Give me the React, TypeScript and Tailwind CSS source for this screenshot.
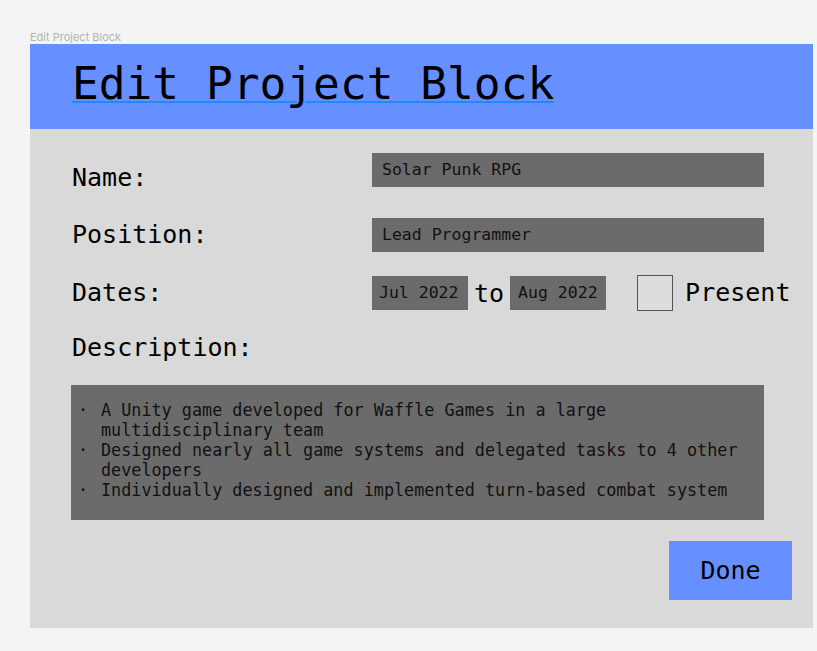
import { useState } from "react"

const mono = { fontFamily: '"DejaVu Sans Mono", monospace' }

function Field({ value, className }: { value: string; className: string }) {
  return (
    <div className={`flex items-center bg-[#6b6b6b] text-[16.5px] leading-[20px] text-[#111] ${className}`}>
      {value}
    </div>
  )
}

export default function App() {
  const [present, setPresent] = useState<boolean>(false)
  const bullets = [
    "A Unity game developed for Waffle Games in a large multidisciplinary team",
    "Designed nearly all game systems and delegated tasks to 4 other developers",
    "Individually designed and implemented turn-based combat system",
  ]

  return (
    <div className="min-h-[651px] w-[817px] bg-[#f4f4f4] pt-[30px] pl-[30px]">
      <div className="text-[11px] leading-[14px] text-[#b3b3b3]" style={{ fontFamily: "Inter, sans-serif" }}>
        Edit Project Block
      </div>
      <div className="w-[783px] h-[584px] bg-[#d9d9d9] flex flex-col" style={mono}>
        <div className="h-[85px] bg-[#6690ff] pl-[42px] pt-[13px]">
          <h1 className="text-[44.5px] leading-[54px] text-black underline decoration-[#1a8cff] decoration-2 underline-offset-[2px]">
            Edit Project Block
          </h1>
        </div>

        <div className="flex flex-col pl-[42px] pt-[24px] text-black">
          <div className="flex items-start h-[34px]">
            <div className="w-[300px] text-[25px] leading-[30px] mt-[10px]">Name:</div>
            <Field value="Solar Punk RPG" className="w-[392px] h-[34px] pl-[10px]" />
          </div>

          <div className="flex items-center mt-[31px]">
            <div className="w-[300px] text-[25px] leading-[30px]">Position:</div>
            <Field value="Lead Programmer" className="w-[392px] h-[34px] pl-[10px]" />
          </div>

          <div className="flex items-center mt-[23px]">
            <div className="w-[300px] text-[25px] leading-[30px]">Dates:</div>
            <Field value="Jul 2022" className="w-[96px] h-[34px] pl-[7px]" />
            <span className="text-[25px] leading-[30px] mx-[6px] mt-[2px]">to</span>
            <Field value="Aug 2022" className="w-[96px] h-[34px] pl-[8px]" />
            <button
              onClick={() => setPresent(!present)}
              className="ml-[31px] w-[36px] h-[36px] border border-[#555] bg-[#dcdcdc] flex items-center justify-center text-[22px]"
            >
              {present ? "✓" : ""}
            </button>
            <span className="ml-[12px] text-[25px] leading-[30px]">Present</span>
          </div>

          <div className="text-[25px] leading-[30px] mt-[22px]">Description:</div>

          <div className="mt-[22px] -ml-[1px] w-[693px] h-[135px] bg-[#6b6b6b] pt-[15px] pl-[7px] pr-[8px] text-[16.8px] leading-[20px] text-[#111]">
            {bullets.map((b) => (
              <div key={b} className="flex">
                <span className="w-[23px] shrink-0">·</span>
                <span>{b}</span>
              </div>
            ))}
          </div>
        </div>

        <div className="flex justify-end pr-[21px] mt-[21px]">
          <button className="w-[123px] h-[59px] bg-[#6690ff] text-[25px] text-black flex items-center justify-center">
            Done
          </button>
        </div>
      </div>
    </div>
  )
}
